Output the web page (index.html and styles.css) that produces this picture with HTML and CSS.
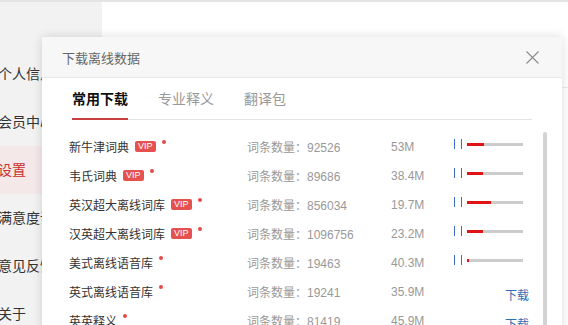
FILE: index.html
```html
<!DOCTYPE html>
<html lang="zh-CN">
<head>
    <meta charset="UTF-8">
    <meta name="viewport" content="width=device-width, initial-scale=1.0">
    <title>下载离线数据</title>
    <link rel="stylesheet" href="styles.css">
</head>
<body>
    <div class="page">
        <ul class="side-menu">
            <li>个人信息</li>
            <li>会员中心</li>
            <li class="active">设置</li>
            <li>满意度调查</li>
            <li>意见反馈</li>
            <li>关于</li>
        </ul>
        <div class="main">
            <div class="main-head"></div>
        </div>
    </div>

    <div class="dialog">
        <div class="dialog-head">
            <span class="dialog-title">下载离线数据</span>
            <svg class="close" width="13" height="13" viewBox="0 0 13 13">
                <path d="M0.5 0.5 L12.5 12.5 M12.5 0.5 L0.5 12.5" stroke="#8a8a8a" stroke-width="1.1" fill="none"/>
            </svg>
        </div>
        <div class="tabs">
            <span class="tab active">常用下载</span>
            <span class="tab">专业释义</span>
            <span class="tab">翻译包</span>
        </div>
        <div class="list-wrap">
            <div class="list">
                <div class="row">
                    <div class="name">新牛津词典<span class="vip">VIP</span><i class="dot"></i></div>
                    <div class="count">词条数量：92526</div>
                    <div class="size">53M</div>
                    <div class="action">
                        <span class="pause"></span>
                        <span class="bar"><span class="fill" style="width: 17px"></span></span>
                    </div>
                </div>
                <div class="row">
                    <div class="name">韦氏词典<span class="vip">VIP</span><i class="dot"></i></div>
                    <div class="count">词条数量：89686</div>
                    <div class="size">38.4M</div>
                    <div class="action">
                        <span class="pause"></span>
                        <span class="bar"><span class="fill" style="width: 16px"></span></span>
                    </div>
                </div>
                <div class="row">
                    <div class="name">英汉超大离线词库<span class="vip">VIP</span><i class="dot"></i></div>
                    <div class="count">词条数量：856034</div>
                    <div class="size">19.7M</div>
                    <div class="action">
                        <span class="pause"></span>
                        <span class="bar"><span class="fill" style="width: 24px"></span></span>
                    </div>
                </div>
                <div class="row">
                    <div class="name">汉英超大离线词库<span class="vip">VIP</span><i class="dot"></i></div>
                    <div class="count">词条数量：1096756</div>
                    <div class="size">23.2M</div>
                    <div class="action">
                        <span class="pause"></span>
                        <span class="bar"><span class="fill" style="width: 16px"></span></span>
                    </div>
                </div>
                <div class="row">
                    <div class="name">美式离线语音库<i class="dot"></i></div>
                    <div class="count">词条数量：19463</div>
                    <div class="size">40.3M</div>
                    <div class="action">
                        <span class="pause"></span>
                        <span class="bar"><span class="fill" style="width: 2px"></span></span>
                    </div>
                </div>
                <div class="row">
                    <div class="name">英式离线语音库<i class="dot"></i></div>
                    <div class="count">词条数量：19241</div>
                    <div class="size">35.9M</div>
                    <div class="action"><a class="download">下载</a></div>
                </div>
                <div class="row">
                    <div class="name">英英释义<i class="dot"></i></div>
                    <div class="count">词条数量：81419</div>
                    <div class="size">45.9M</div>
                    <div class="action"><a class="download">下载</a></div>
                </div>
            </div>
            <div class="scroll-thumb"></div>
        </div>
    </div>
</body>
</html>
```

FILE: styles.css
```css
* { box-sizing: border-box; }
body { margin: 0; width: 568px; height: 325px; overflow: hidden; background: #fff; font-family: "Liberation Sans", "Noto Sans CJK SC", sans-serif; }

.page { display: flex; height: 325px; border-top: 2px solid #e4e4e4; }
.side-menu { list-style: none; margin: 0; padding: 48px 0 0; width: 102px; background: #f2f2f2; }
.side-menu li { height: 48px; line-height: 48px; font-size: 14px; color: #333; margin-left: -2px; white-space: nowrap; overflow: hidden; }
.side-menu li.active { color: #c62f2c; background: #f5e8e8; }
.main { flex: 1; }
.main-head { height: 86px; border-bottom: 1px solid #ececec; }

.dialog { position: absolute; left: 42px; top: 37px; width: 520px; height: 300px; background: #fff; box-shadow: 0 0 10px rgba(0, 0, 0, 0.14); }
.dialog-head { display: flex; align-items: center; justify-content: space-between; height: 41px; padding: 0 23px 0 20px; background: #f7f7f7; border-bottom: 1px solid #e8e8e8; }
.dialog-title { font-size: 13px; color: #666; }

.tabs { display: flex; gap: 30px; margin: 0 30px; border-bottom: 1px solid #e2e2e2; }
.tab { font-size: 14px; line-height: 20px; color: #999; padding: 11px 0 9px; border-bottom: 2px solid transparent; margin-bottom: -1px; }
.tab.active { color: #111; font-weight: bold; border-bottom-color: #c9413f; }

.list-wrap { display: flex; padding: 12px 15px 0 27px; }
.list { width: 460px; }
.row { display: flex; align-items: center; height: 29px; font-size: 12px; }
.name { display: flex; align-items: center; width: 178px; color: #333; white-space: nowrap; }
.vip { margin-left: 6px; padding: 0 3px; height: 11px; line-height: 11px; font-size: 9px; color: #fff; background: #e4514f; border-radius: 2px; }
.dot { width: 4px; height: 4px; margin-left: 6px; margin-bottom: 10px; border-radius: 50%; background: #e34b4b; }
.count { width: 144px; color: #999; }
.size { width: 62px; color: #999; }
.action { display: flex; align-items: center; justify-content: flex-end; width: 76px; margin-bottom: 5px; }
.pause { width: 8px; height: 10px; border-left: 1px solid #3d6ec4; border-right: 1px solid #3d6ec4; margin-right: 5px; }
.bar { width: 56px; height: 3px; margin-right: 6px; background: #cccccc; }
.fill { display: block; height: 3px; background: #e01414; }
.download { color: #2f6db4; margin-top: 10px; }

.scroll-thumb { width: 6px; height: 220px; margin-left: 14px; border-radius: 3px; background: #d3d3d3; }
```
